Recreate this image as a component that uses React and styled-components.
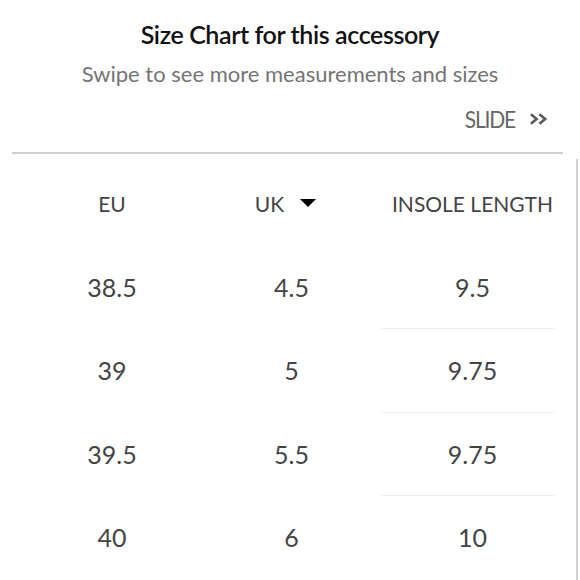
import React from 'react';
import styled, { createGlobalStyle } from 'styled-components';

const GlobalStyle = createGlobalStyle`
  body {
    margin: 0;
    background: #fff;
    font-family: Lato, 'Noto Sans', sans-serif;
  }
`;

const rows = [
  ['38.5', '4.5', '9.5'],
  ['39', '5', '9.75'],
  ['39.5', '5.5', '9.75'],
  ['40', '6', '10'],
];

export default function App() {
  return (
    <Page>
      <GlobalStyle />
      <Title>Size Chart for this accessory</Title>
      <Subtitle>Swipe to see more measurements and sizes</Subtitle>
      <SlideRow>
        <Slide>SLIDE</Slide>
        <Chevrons viewBox="0 0 20 14" aria-hidden="true">
          <path d="M2 2l6 5-6 5M11 2l6 5-6 5" />
        </Chevrons>
      </SlideRow>
      <Divider />
      <TableWrap>
        <Grid>
          <Cell>EU</Cell>
          <Cell>
            <SortHead>
              UK <Caret />
            </SortHead>
          </Cell>
          <Cell $last>INSOLE LENGTH</Cell>
          {rows.map((r, i) => (
            <React.Fragment key={i}>
              <Cell $value>{r[0]}</Cell>
              <Cell $value>{r[1]}</Cell>
              <Cell $value $last $sep={i > 0}>
                {r[2]}
              </Cell>
            </React.Fragment>
          ))}
        </Grid>
      </TableWrap>
    </Page>
  );
}

const Page = styled.div`
  width: 580px;
  height: 580px;
  overflow: hidden;
`;

const Title = styled.h1`
  margin: 0;
  padding-top: 18px;
  text-align: center;
  font-size: 25px;
  font-weight: 600;
  letter-spacing: -0.4px;
  color: #111;
  line-height: 32px;
`;

const Subtitle = styled.p`
  margin: 10px 0 0;
  text-align: center;
  font-size: 22px;
  color: #747474;
  line-height: 28px;
`;

const SlideRow = styled.div`
  display: flex;
  justify-content: flex-end;
  align-items: center;
  gap: 14px;
  padding-right: 32px;
  margin-top: 18px;
  height: 26px;
`;

const Slide = styled.span`
  font-size: 21px;
  color: #666;
  letter-spacing: -1.2px;
  line-height: 26px;
  transform: scaleY(1.08);
`;

const Chevrons = styled.svg`
  width: 19px;
  height: 14px;
  fill: none;
  stroke: #5a5a5a;
  stroke-width: 2.8;
`;

const Divider = styled.div`
  margin: 20px 17px 0 12px;
  height: 2px;
  background: #cfcfcf;
`;

const TableWrap = styled.div`
  margin: 5px 0 0 22px;
  width: 554px;
  border-right: 2px solid #d2d2d2;
  padding-top: 2px;
  height: 420px;
`;

const Grid = styled.div`
  display: grid;
  grid-template-columns: 180px 179px 174px;
  grid-auto-rows: 83.5px;
`;

const Cell = styled.div`
  display: flex;
  align-items: center;
  justify-content: center;
  color: #444;
  font-size: ${p => (p.$value ? '25px' : '21px')};
  padding-left: ${p => (p.$last ? '9px' : '0')};
  border-top: 1px solid ${p => (p.$sep ? '#ececec' : 'transparent')};
`;

const SortHead = styled.span`
  display: flex;
  align-items: center;
  gap: 16px;
  margin-right: 12px;
`;

const Caret = styled.span`
  width: 0;
  height: 0;
  border-left: 8px solid transparent;
  border-right: 8px solid transparent;
  border-top: 8px solid #000;
`;
